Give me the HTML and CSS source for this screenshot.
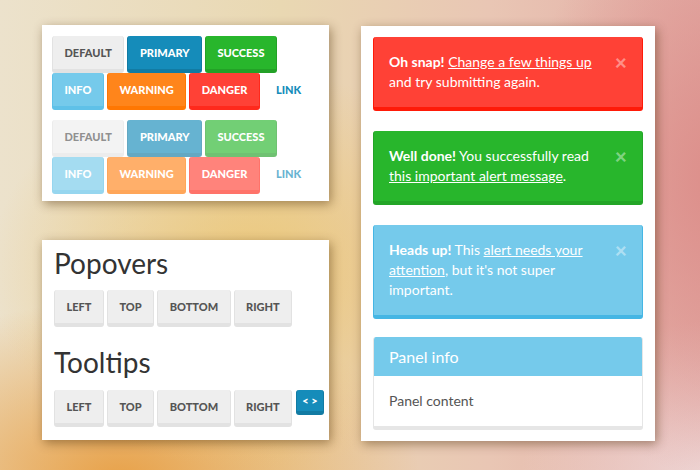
FILE: index.html
```html
<!DOCTYPE html>
<html>
<head>
<meta charset="utf-8">
<title>Lumen components</title>
<link rel="stylesheet" href="styles.css">
</head>
<body>
<div class="stage">
  <div class="col-left">
    <section class="card card-buttons">
      <div class="btn-set">
        <div class="btn-row">
          <button class="btn btn-default">Default</button>
          <button class="btn btn-primary">Primary</button>
          <button class="btn btn-success">Success</button>
        </div>
        <div class="btn-row">
          <button class="btn btn-info">Info</button>
          <button class="btn btn-warning">Warning</button>
          <button class="btn btn-danger">Danger</button>
          <button class="btn btn-link">Link</button>
        </div>
      </div>
      <div class="btn-set is-disabled">
        <div class="btn-row">
          <button class="btn btn-default">Default</button>
          <button class="btn btn-primary">Primary</button>
          <button class="btn btn-success">Success</button>
        </div>
        <div class="btn-row">
          <button class="btn btn-info">Info</button>
          <button class="btn btn-warning">Warning</button>
          <button class="btn btn-danger">Danger</button>
          <button class="btn btn-link">Link</button>
        </div>
      </div>
    </section>

    <section class="card card-tips">
      <h2 class="tips-title">Popovers</h2>
      <div class="btn-row">
        <button class="btn btn-default">Left</button>
        <button class="btn btn-default">Top</button>
        <button class="btn btn-default">Bottom</button>
        <button class="btn btn-default">Right</button>
      </div>
      <h2 class="tips-title tips-title-second">Tooltips</h2>
      <div class="btn-row">
        <button class="btn btn-default">Left</button>
        <button class="btn btn-default">Top</button>
        <button class="btn btn-default">Bottom</button>
        <button class="btn btn-default">Right</button>
        <button class="btn btn-primary btn-xs">&lt; &gt;</button>
      </div>
    </section>
  </div>

  <section class="card card-alerts">
    <div class="alert alert-danger">
      <p class="alert-text"><strong>Oh snap!</strong> <a href="#">Change a few things up</a> and try submitting again.</p>
      <span class="close">&times;</span>
    </div>
    <div class="alert alert-success">
      <p class="alert-text"><strong>Well done!</strong> You successfully read <a href="#">this important alert message</a>.</p>
      <span class="close">&times;</span>
    </div>
    <div class="alert alert-info">
      <p class="alert-text"><strong>Heads up!</strong> This <a href="#">alert needs your attention</a>, but it's not super important.</p>
      <span class="close">&times;</span>
    </div>
    <div class="panel">
      <div class="panel-heading">Panel info</div>
      <div class="panel-body">Panel content</div>
    </div>
  </section>
</div>
</body>
</html>
```

FILE: styles.css
```css
* { box-sizing: border-box; }

html, body {
  margin: 0;
  width: 700px;
  height: 470px;
  overflow: hidden;
}

body {
  font-family: Lato, "Open Sans", sans-serif;
  font-size: 14px;
  color: #555;
  background:
    radial-gradient(ellipse 260px 200px at 250px 270px, rgba(236, 196, 112, 0.85), rgba(236, 196, 112, 0) 100%),
    radial-gradient(ellipse 300px 180px at 120px 480px, rgba(232, 158, 66, 0.95), rgba(232, 158, 66, 0) 100%),
    radial-gradient(ellipse 200px 300px at 720px 180px, rgba(220, 140, 136, 0.95), rgba(220, 140, 136, 0) 100%),
    radial-gradient(ellipse 200px 160px at 720px 480px, rgba(240, 222, 222, 0.9), rgba(240, 222, 222, 0) 100%),
    linear-gradient(90deg, #ece2cc 0%, #e9d8b2 40%, #e9c6b4 70%, #e3aca6 100%);
}

.stage {
  display: flex;
  align-items: flex-start;
  gap: 32px;
  padding: 25px 0 0 42px;
}

.col-left {
  display: flex;
  flex-direction: column;
  gap: 39px;
  width: 287px;
}

.card {
  background: #fff;
  box-shadow: 2px 3px 10px rgba(70, 40, 5, 0.45);
}

.card-buttons {
  height: 176px;
  padding: 11px 10px 0;
  display: flex;
  flex-direction: column;
  gap: 10px;
}

.btn-set {
  display: flex;
  flex-direction: column;
  gap: 0;
}

.btn-row {
  display: flex;
  align-items: flex-start;
  gap: 3px;
  white-space: nowrap;
}

.btn {
  font-family: inherit;
  font-size: 11px;
  line-height: 17px;
  font-weight: 900;
  text-transform: uppercase;
  padding: 8px 11.5px;
  margin: 0;
  border-style: solid;
  border-width: 0 1px 4px 1px;
  border-radius: 3px;
  color: #fff;
  white-space: nowrap;
  cursor: pointer;
}

.btn-default { background: #eeeeee; border-color: #e2e2e2; color: #555; }
.btn-primary { background: #158cba; border-color: #127ba3; }
.btn-success { background: #28b62c; border-color: #23a127; }
.btn-info    { background: #75caeb; border-color: #5fc1e8; }
.btn-warning { background: #ff851b; border-color: #ff7702; }
.btn-danger  { background: #ff4136; border-color: #ff291c; }
.btn-link    { background: transparent; border-color: transparent; color: #158cba; padding-left: 12px; }

.is-disabled .btn { opacity: 0.65; }

.btn-xs {
  font-size: 11px;
  line-height: 13px;
  padding: 4px 5px;
  margin-left: 1px;
}

.card-tips {
  height: 200px;
  padding: 6px 12px 0;
}

.tips-title {
  margin: 0 0 10px;
  font-size: 28px;
  line-height: 34px;
  font-weight: 400;
  color: #333;
}

.tips-title-second {
  margin-top: 18px;
  margin-bottom: 11px;
}

.card-alerts {
  width: 294px;
  height: 415px;
  margin-top: 1px;
  padding: 11px 12px 0;
  display: flex;
  flex-direction: column;
}

.alert {
  display: flex;
  align-items: flex-start;
  padding: 15px 15px 15px 15px;
  border-style: solid;
  border-width: 0 1px 4px 1px;
  border-radius: 3px;
  color: #fff;
  margin-bottom: 20px;
}

.alert-text {
  margin: 0;
  flex: 1;
  padding-right: 20px;
  line-height: 20px;
}

.alert-text a { color: #fff; }

.close {
  font-size: 21px;
  font-weight: 900;
  line-height: 20px;
  color: rgba(255, 255, 255, 0.42);
}

.alert-danger  { background: #ff4136; border-color: #ff1a08; }
.alert-success { background: #28b62c; border-color: #23a527; }
.alert-info    { background: #75caeb; border-color: #45b6e4; margin-bottom: 18px; }

.panel {
  border-style: solid;
  border-width: 0 1px 4px 1px;
  border-color: #e6e6e6;
  border-radius: 3px;
  overflow: hidden;
}

.panel-heading {
  background: #75caeb;
  color: #fff;
  font-size: 16px;
  line-height: 21px;
  padding: 9px 15px;
}

.panel-body {
  padding: 15px;
  line-height: 20px;
}
```
